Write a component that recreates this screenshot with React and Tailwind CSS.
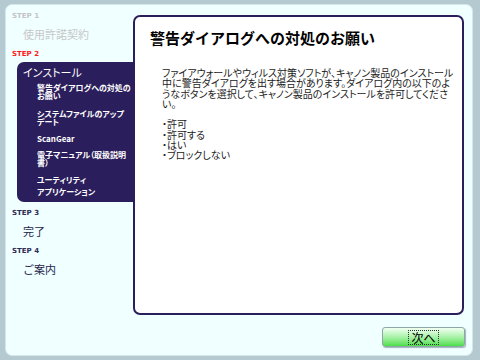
const jp = "font-['Noto_Sans_CJK_JP',sans-serif]";
const step = "font-['DejaVu_Sans',sans-serif] font-bold text-[7px] leading-[8px]";

const subItems = [
  { lines: ["警告ダイアログへの対処の", "お願い"], mt: "mt-[6px]" },
  { lines: ["システムファイルのアップ", "デート"], mt: "mt-[10px]" },
  { lines: ["ScanGear"], mt: "mt-[9px]" },
  { lines: ["電子マニュアル（取扱説明", "書）"], mt: "mt-[8px]" },
  { lines: ["ユーティリティ"], mt: "mt-[9px]" },
  { lines: ["アプリケーション"], mt: "mt-[4px]" },
];

const bodyLines = [
  "ファイアウォールやウィルス対策ソフトが、キャノン製品のインストール",
  "中に警告ダイアログを出す場合があります。ダイアログ内の以下のよ",
  "うなボタンを選択して、キャノン製品のインストールを許可してくださ",
  "い。",
];

const buttons = ["・許可", "・許可する", "・はい", "・ブロックしない"];

const App = () => {
  return (
    <div className="w-[480px] h-[360px] bg-[#b5cad0] pl-[5px] pt-[4px] pr-[7px] pb-[4px] overflow-hidden">
      <div className="h-full bg-[#f0ffff] rounded-[7px] border border-[#d4e8ec] flex">
        {/* left step list */}
        <div className="w-[127px] shrink-0 flex flex-col">
          <div className={`${step} text-[#c4c4c4] pl-[6px] mt-[7px]`}>STEP 1</div>
          <div className={`${jp} text-[11px] leading-[12px] text-[#c8c8c8] pl-[17px] mt-[8px]`}>使用許諾契約</div>
          <div className={`${step} text-[#ff1a1a] pl-[6px] mt-[10px]`}>STEP 2</div>
          <div className="ml-[11px] mt-[4px] bg-[#2b1e5c] rounded-l-[7px] pl-[6px] pt-[4px] pb-[6px] text-white">
            <div className={`${jp} text-[11px] leading-[12px] [font-feature-settings:'palt']`}>インストール</div>
            {subItems.map((it, i) => (
              <div key={i} className={`${jp} ${it.mt} pl-[14px] font-bold text-[8px] leading-[8px] whitespace-nowrap [font-feature-settings:'palt']`}>
                {it.lines.map((l, j) => (
                  <div key={j}>{l}</div>
                ))}
              </div>
            ))}
          </div>
          <div className={`${step} text-[#2e2b55] pl-[6px] mt-[7px]`}>STEP 3</div>
          <div className={`${jp} text-[11px] leading-[12px] text-[#26244a] pl-[17px] mt-[8px]`}>完了</div>
          <div className={`${step} text-[#2e2b55] pl-[6px] mt-[10px]`}>STEP 4</div>
          <div className={`${jp} text-[11px] leading-[12px] text-[#26244a] pl-[17px] mt-[8px]`}>ご案内</div>
        </div>

        {/* right content */}
        <div className="flex-1 flex flex-col pt-[10px] pr-[7px]">
          <div className="h-[300px] mr-[1px] bg-white border-2 border-[#2b1e5c] rounded-[7px] pl-[15px] pt-[12px]">
            <h1 className={`${jp} font-bold text-[15px] leading-[18px] text-black whitespace-nowrap`}>
              警告ダイアログへの対処のお願い
            </h1>
            <div className={`${jp} mt-[21px] ml-[12px] text-[10px] leading-[10.3px] text-[#222] whitespace-nowrap [font-feature-settings:'palt']`}>
              {bodyLines.map((l, i) => (
                <div key={i}>{l}</div>
              ))}
              <div className="h-[10.3px]" />
              {buttons.map((b, i) => (
                <div key={i}>{b}</div>
              ))}
            </div>
          </div>
          <div className="flex justify-end mt-[12px]">
            <button className="w-[83px] h-[20px] rounded-[3px] border border-[#8ea6a8] bg-gradient-to-b from-[#f2fff2] via-[#a8f2a8] to-[#48de48] shadow-[1px_1px_1px_rgba(80,110,120,0.5)] flex items-center justify-center">
              <span className={`${jp} text-[12px] leading-[13px] text-black border border-dotted border-[#333] px-[2px]`}>次へ</span>
            </button>
          </div>
        </div>
      </div>
    </div>
  );
};

export default App;
